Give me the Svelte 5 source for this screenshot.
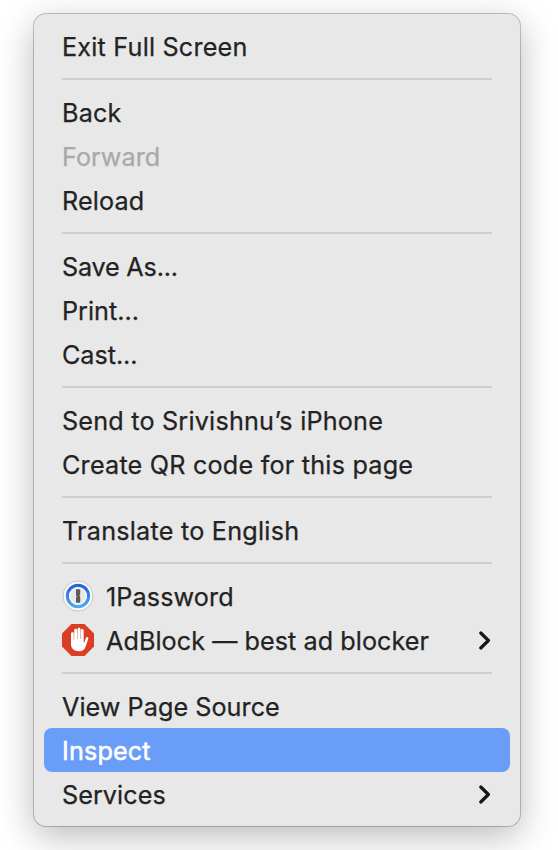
<script>
  const groups = [
    [{ label: 'Exit Full Screen', tracking: 0.2 }],
    [
      { label: 'Back', tracking: 0.2 },
      { label: 'Forward', disabled: true, tracking: 0.05 },
      { label: 'Reload', tracking: 0.15 }
    ],
    [
      { label: 'Save As...', tracking: -0.2 },
      { label: 'Print...' },
      { label: 'Cast...', tracking: -0.05 }
    ],
    [
      { label: 'Send to Srivishnu’s iPhone', tracking: 0.2 },
      { label: 'Create QR code for this page', tracking: 0.21 }
    ],
    [{ label: 'Translate to English', tracking: 0.23 }],
    [
      { label: '1Password', icon: 'onepassword', tracking: 0.1 },
      { label: 'AdBlock — best ad blocker', icon: 'adblock', submenu: true, tracking: 0.05 }
    ],
    [
      { label: 'View Page Source', tracking: 0.04 },
      { label: 'Inspect', active: true, tracking: 0.15 },
      { label: 'Services', submenu: true, tracking: 0.05 }
    ]
  ];
</script>

<div class="desktop">
  <div class="menu" role="menu">
    {#each groups as group, i}
      {#if i > 0}
        <div class="separator" role="separator"></div>
      {/if}
      {#each group as item}
        <div
          class="item"
          class:disabled={item.disabled}
          class:active={item.active}
          role="menuitem"
          tabindex="-1"
          aria-disabled={item.disabled}
        >
          {#if item.icon === 'onepassword'}
            <svg class="icon" viewBox="0 0 32 32">
              <defs>
                <linearGradient id="ring" x1="0" y1="0" x2="0" y2="1">
                  <stop offset="0" stop-color="#2465dc" />
                  <stop offset="1" stop-color="#4fa9f2" />
                </linearGradient>
              </defs>
              <circle cx="16" cy="16" r="15" fill="#fdfdfd" stroke="#bcbcbc" stroke-width="0.9" />
              <circle cx="16" cy="16" r="10.6" fill="#e9e9e9" stroke="url(#ring)" stroke-width="3.200" />
              <circle cx="16" cy="16" r="8.400" fill="none" stroke="#fafafa" stroke-width="1.200" />
              <path
                d="M14 9.200h4.200v5.400l-.8.9.8.9v6.400H14v-5.400l.8-.9-.8-.9z"
                fill="#5c5c5c"
              />
            </svg>
          {:else if item.icon === 'adblock'}
            <svg class="icon" viewBox="0 0 32 32">
              <path d="M9.500 0h13L32 9.500v13L22.500 32h-13L0 22.500v-13z" fill="#dc3d25" />
              <path
                d="M9 9.600c0-1.800 2.800-1.800 2.800 0v5.900h.4V6.100c0-1.900 3-1.900 3 0V15h.4V5.200c0-1.900 2.900-1.900 2.900 0V15h.4V6.400c0-1.800 2.800-1.800 2.800 0v12.100l.5.200 1.600-4.500c.6-1.900 3-1.500 2.500.5l-2.600 7.800c-1 3-3.200 4.700-6.300 4.700C11.600 27.200 9 24.200 9 20z"
                fill="#fff"
              />
            </svg>
          {/if}
          <span class="label" style="letter-spacing: {item.tracking ?? 0}px">{item.label}</span>
          {#if item.submenu}
            <svg class="chevron" viewBox="0 0 12 20">
              <path d="M1.800 3l7.600 7.500-7.600 7.500" />
            </svg>
          {/if}
        </div>
      {/each}
    {/each}
  </div>
</div>

<style>
  :global(body) {
    background: #fff;
  }

  .desktop {
    box-sizing: border-box;
    height: 850px;
    padding: 14px 38px 0 34px;
    overflow: hidden;
  }

  .menu {
    box-sizing: border-box;
    height: 812px;
    padding: 10px;
    border-radius: 12px;
    background: #e8e8e8;
    box-shadow:
      0 0 0 1px rgba(0, 0, 0, 0.22),
      0 10px 36px rgba(0, 0, 0, 0.28);
    font-family: Inter, 'Liberation Sans', sans-serif;
    font-size: 25.2px;
    color: #232323;
    -webkit-text-stroke: 0.25px currentColor;
    cursor: default;
  }

  .item {
    box-sizing: border-box;
    display: flex;
    align-items: center;
    height: 44px;
    padding: 0 18px;
    border-radius: 8px;
    line-height: 44px;
    white-space: nowrap;
  }

  .item.disabled {
    color: #a9a9a9;
  }

  .item.active {
    background: #699df8;
    color: #fff;
    -webkit-text-stroke-width: 0.5px;
  }

  .label {
    flex: 1;
    padding-top: 2px;
  }

  .separator {
    height: 2px;
    margin: 10px 18px;
    background: #cecece;
  }

  .icon {
    width: 32px;
    height: 32px;
    margin-right: 12px;
  }

  .chevron {
    width: 12px;
    height: 20px;
    margin-right: 1px;
    fill: none;
    stroke: #161616;
    stroke-width: 3.2;
    stroke-linecap: round;
    stroke-linejoin: round;
  }
</style>
